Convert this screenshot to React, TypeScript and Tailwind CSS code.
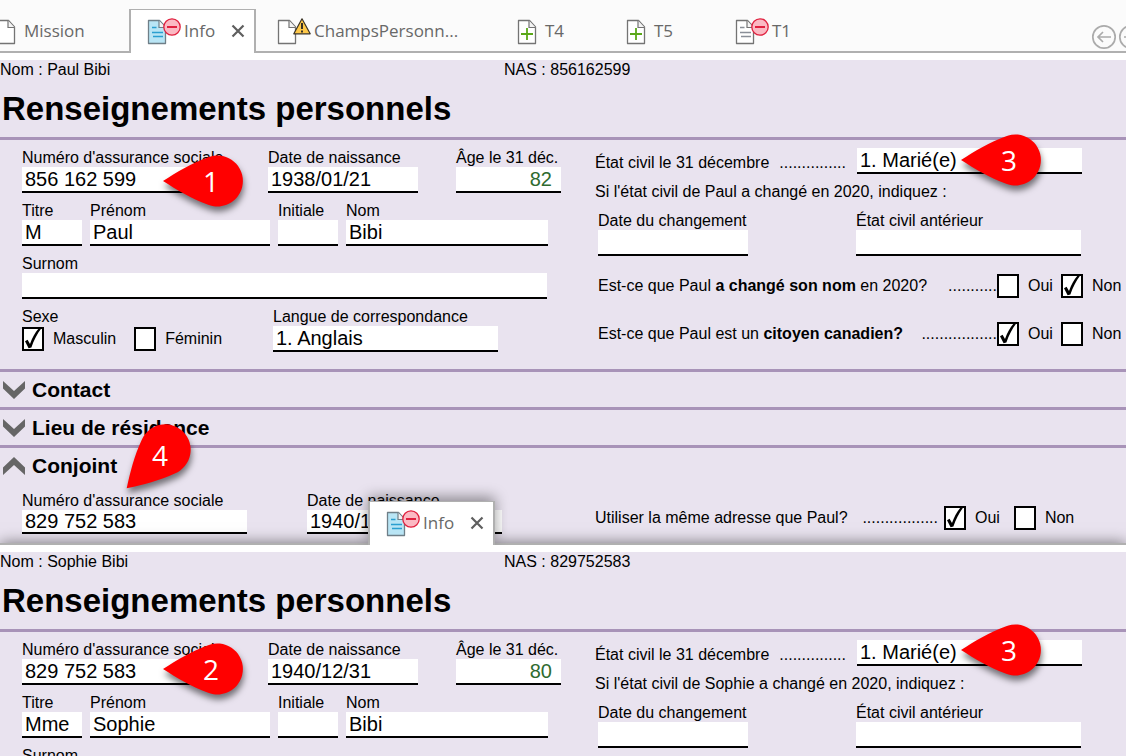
import React, { useId } from "react";

type Badge = "minus" | "warning";
type DocKind = "blank" | "lines" | "active" | "plus";

interface DocIconProps {
  kind: DocKind;
  badge?: Badge;
}

const DocIcon: React.FC<DocIconProps> = ({ kind, badge }) => {
  const stroke = kind === "active" ? "#6f7f88" : "#747474";
  const lineColor = kind === "active" ? "#2a9fd0" : "#8a8f98";

  return (
    <svg
      width={badge ? 34 : 20}
      height={28}
      viewBox={badge ? "0 0 34 28" : "0 0 20 28"}
      fill="none"
      className="shrink-0"
      aria-hidden="true"
    >
      <path
        d="M1.5 3.5H12.5L18.5 10V26.5H1.5Z"
        fill={kind === "active" ? "#b9e5f5" : "#ffffff"}
        stroke={stroke}
        strokeWidth={1.3}
        strokeLinejoin="round"
      />
      <path d="M12 3.5V10.5H18.5" fill="#f4f4f4" stroke={stroke} strokeWidth={1.2} />
      {(kind === "lines" || kind === "active") && (
        <path d="M5 10.5H9.5M5 15.5H16M6 19.5H16" stroke={lineColor} strokeWidth={1.4} />
      )}
      {kind === "plus" && (
        <path d="M4 17H16M10 11V23" stroke="#5aa818" strokeWidth={1.8} />
      )}
      {badge === "minus" && (
        <>
          <circle cx={25} cy={10} r={8.2} fill="#fbb9c3" stroke="#e0213f" strokeWidth={1.3} />
          <path d="M20 10H30" stroke="#e0213f" strokeWidth={2} />
        </>
      )}
      {badge === "warning" && (
        <>
          <path
            d="M25 1.8L33.2 16.8H16.8Z"
            fill="#ffc94a"
            stroke="#3a3326"
            strokeWidth={1.2}
            strokeLinejoin="round"
          />
          <path d="M25 6V12M25 13.4V15.4" stroke="#222222" strokeWidth={1.8} />
        </>
      )}
    </svg>
  );
};

const CloseIcon = () => (
  <svg width={14} height={14} viewBox="0 0 14 14" fill="none" aria-hidden="true">
    <path d="M1.5 1.5L12.5 12.5M12.5 1.5L1.5 12.5" stroke="#5f5f5f" strokeWidth={2.2} />
  </svg>
);

const ArrowIcon = ({ flip = false }: { flip?: boolean }) => (
  <svg
    width={26}
    height={26}
    viewBox="0 0 26 26"
    fill="none"
    stroke="#ababab"
    strokeWidth={1.7}
    className={flip ? "rotate-180" : ""}
    aria-hidden="true"
  >
    <circle cx={13} cy={13} r={11.2} />
    <path d="M20 13H7.5M12 8L7 13L12 18" />
  </svg>
);

const ActiveTab = () => (
  <div className="flex h-11 w-[127px] shrink-0 items-center border-x-2 border-t border-[#b0b0b0] bg-white pb-0.5 pl-4 text-[17px] text-[#686868]">
    <button type="button" className="flex items-center gap-[3px]">
      <DocIcon kind="active" badge="minus" />
      Info
    </button>
    <button type="button" aria-label="Fermer" className="ml-4">
      <CloseIcon />
    </button>
  </div>
);

interface TabProps {
  label: string;
  kind: DocKind;
  badge?: Badge;
  className: string;
}

const Tab: React.FC<TabProps> = ({ label, kind, badge, className }) => (
  <button
    type="button"
    className={`flex h-11 shrink-0 items-center border-b-2 border-[#b0b0b0] pt-px text-[17px] whitespace-nowrap text-[#686868] ${
      badge ? "gap-[3px]" : "gap-2"
    } ${className}`}
  >
    <DocIcon kind={kind} badge={badge} />
    {label}
  </button>
);

interface FieldProps {
  label: string;
  width: string;
  value?: string;
  options?: boolean;
  computed?: boolean;
  hideLabel?: boolean;
  short?: boolean;
}

const Field: React.FC<FieldProps> = ({
  label,
  width,
  value = "",
  options = false,
  computed = false,
  hideLabel = false,
  short = false,
}) => {
  const id = useId();
  const box = `block w-full appearance-none rounded-none border-b-2 border-black bg-white px-[3px] text-[20px] outline-none ${
    short ? "h-6 leading-5" : "h-[26px] leading-6"
  } ${computed ? "pr-[9px] text-right text-[#2f6b2f]" : ""}`;

  return (
    <div className={`shrink-0 ${width}`}>
      {!hideLabel && (
        <label htmlFor={id} className="block h-5 leading-[22px] whitespace-nowrap">
          {label}
        </label>
      )}
      {options ? (
        <select id={id} aria-label={label} defaultValue={value} className={box}>
          <option value={value}>{value}</option>
        </select>
      ) : (
        <input
          id={id}
          type="text"
          defaultValue={value}
          readOnly={computed}
          className={box}
        />
      )}
    </div>
  );
};

interface CheckProps {
  label: string;
  checked?: boolean;
}

const Check: React.FC<CheckProps> = ({ label, checked = false }) => (
  <label className="flex shrink-0 items-center gap-[9px]">
    <span className="relative block h-6 w-[22px]">
      <input
        type="checkbox"
        defaultChecked={checked}
        className="peer block h-6 w-[22px] appearance-none border-2 border-black bg-white"
      />
      <svg
        viewBox="0 0 22 24"
        className="pointer-events-none absolute inset-0 hidden h-6 w-[22px] peer-checked:block"
        aria-hidden="true"
      >
        <path
          d="M3 14.2L5.6 12.8L8 17C10.2 11 13 5.5 16.6 1.5L19.2 1.5C15 7 11.8 13.500 9.400 20.500L6.600 21.300Z"
          fill="#000000"
        />
      </svg>
    </span>
    {label}
  </label>
);

interface PinProps {
  number: number;
  className: string;
  tilted?: boolean;
}

const Pin: React.FC<PinProps> = ({ number, className, tilted = false }) => (
  <div
    className={`pointer-events-none absolute z-10 flex h-[52px] w-20 items-center justify-center ${className}`}
  >
    <svg
      viewBox="0 0 80 52"
      className="absolute inset-0 h-[52px] w-20 overflow-visible drop-shadow-[1px_5px_3px_rgba(0,0,0,0.5)]"
      aria-hidden="true"
    >
      <path
        d="M0 26C14 17 29 8 44.500 2.500A25.500 25.500 0 1 1 44.500 49.500C29 44 14 35 0 26Z"
        fill="#ff0000"
        transform={tilted ? "rotate(-45 40 26)" : undefined}
      />
    </svg>
    <span
      className={`relative font-['Open_Sans',sans-serif] text-[28px] leading-none text-white ${
        tilted ? "pb-2.5 pl-2.5" : "pl-4"
      }`}
    >
      {number}
    </span>
  </div>
);

const Chevron = ({ up = false }: { up?: boolean }) => (
  <svg
    width={22}
    height={18}
    viewBox="0 0 22 18"
    className={up ? "rotate-180" : ""}
    aria-hidden="true"
  >
    <path d="M0 0L11 10L22 0V7.500L11 18L0 7.500Z" fill="#666666" />
  </svg>
);

const SectionHeader = ({ title, open = false }: { title: string; open?: boolean }) => (
  <h2 className="border-t-3 border-[#a893b8]">
    <button
      type="button"
      aria-expanded={open}
      className="flex h-[35px] w-full items-center gap-[7px] pl-[3px] text-[21px] font-bold"
    >
      <Chevron up={open} />
      {title}
    </button>
  </h2>
);

interface Person {
  firstName: string;
  title: string;
  nas: string;
  birthDate: string;
  age: string;
}

const paul: Person = {
  firstName: "Paul",
  title: "M",
  nas: "856 162 599",
  birthDate: "1938/01/21",
  age: "82",
};

const sophie: Person = {
  firstName: "Sophie",
  title: "Mme",
  nas: "829 752 583",
  birthDate: "1940/12/31",
  age: "80",
};

const PageHeader = ({ person }: { person: Person }) => (
  <header>
    <div className="flex">
      <p className="w-[504px] shrink-0">Nom : {person.firstName} Bibi</p>
      <p>NAS : {person.nas.replace(/ /g, "")}</p>
    </div>
    <h1 className="border-b-3 border-[#a893b8] py-[9px] pl-0.5 text-[33px] leading-[39px] font-bold">
      Renseignements personnels
    </h1>
  </header>
);

const IdentityFields = ({ person }: { person: Person }) => (
  <>
    <div className="flex">
      <Field label="Numéro d'assurance sociale" width="w-[180px]" value={person.nas} />
      <div className="ml-[66px] flex gap-[38px]">
        <Field label="Date de naissance" width="w-[150px]" value={person.birthDate} />
        <Field label="Âge le 31 déc." width="w-[105px]" value={person.age} computed />
      </div>
    </div>
    <div className="flex gap-2">
      <Field label="Titre" width="w-[60px]" value={person.title} />
      <Field label="Prénom" width="w-[180px]" value={person.firstName} />
      <Field label="Initiale" width="w-[60px]" />
      <Field label="Nom" width="w-[202px]" value="Bibi" />
    </div>
    <Field label="Surnom" width="w-[525px]" />
  </>
);

const CivilStatus = ({ person }: { person: Person }) => (
  <>
    <div className="flex items-end justify-between">
      <p className="flex w-[251px] justify-between pb-px whitespace-nowrap">
        État civil le 31 décembre <span>...............</span>
      </p>
      <div className="w-[269px] shrink-0">
        <Field
          label="État civil le 31 décembre"
          width="w-[225px]"
          value="1. Marié(e)"
          options
          hideLabel
        />
      </div>
    </div>
    <p className="mt-2 whitespace-nowrap">
      Si l'état civil de {person.firstName} a changé en 2020, indiquez :
    </p>
    <div className="mt-2 flex gap-[108px] pl-[3px]">
      <Field label="Date du changement" width="w-[150px]" />
      <Field label="État civil antérieur" width="w-[225px]" options />
    </div>
  </>
);

interface QuestionProps {
  children: React.ReactNode;
  dots: string;
  answer: "Oui" | "Non";
}

const Question: React.FC<QuestionProps> = ({ children, dots, answer }) => (
  <div className="flex items-center pl-[3px]">
    <p className="flex flex-1 justify-between whitespace-nowrap">
      <span>{children}</span>
      <span>{dots}</span>
    </p>
    <div className="flex w-[129px] shrink-0">
      <div className="w-16">
        <Check label="Oui" checked={answer === "Oui"} />
      </div>
      <Check label="Non" checked={answer === "Non"} />
    </div>
  </div>
);

export default function App() {
  return (
    <div className="h-screen overflow-hidden bg-white font-['Liberation_Sans',Arial,sans-serif] text-[16px] leading-5 text-black">
      {/* Onglets */}
      <nav className="flex h-[53px] items-end overflow-hidden bg-[#fbfbfb] font-['Open_Sans',sans-serif]">
        <Tab label="Mission" kind="blank" className="-ml-1 w-[133px]" />
        <ActiveTab />
        <Tab
          label="ChampsPersonn..."
          kind="blank"
          badge="warning"
          className="w-[242px] pl-[21px]"
        />
        <Tab label="T4" kind="plus" className="w-[109px] pl-[19px]" />
        <Tab label="T5" kind="plus" className="w-[109px] pl-[19px]" />
        <Tab label="T1" kind="lines" badge="minus" className="w-[109px] pl-[19px]" />
        <div className="flex h-11 flex-1 items-end justify-end gap-px border-b-2 border-[#b0b0b0]">
          <button type="button" aria-label="Précédent" className="mb-px shrink-0">
            <ArrowIcon />
          </button>
          <button type="button" aria-label="Suivant" className="-mr-[18px] mb-px shrink-0">
            <ArrowIcon flip />
          </button>
        </div>
      </nav>

      {/* Déclaration de Paul */}
      <main className="relative mt-[7px] bg-[#e9e3ef]">
        <PageHeader person={paul} />
        <div className="flex pb-[17px]">
          <div className="flex w-[595px] shrink-0 flex-col gap-[7px] pt-[7px] pl-[22px]">
            <IdentityFields person={paul} />
            <div className="flex">
              <fieldset className="w-[251px] shrink-0">
                <legend className="h-5 leading-[22px]">Sexe</legend>
                <div className="flex gap-[18px] pt-px">
                  <Check label="Masculin" checked />
                  <Check label="Féminin" />
                </div>
              </fieldset>
              <Field
                label="Langue de correspondance"
                width="w-[225px]"
                value="1. Anglais"
                options
              />
            </div>
          </div>
          <div className="min-w-0 flex-1 pt-2">
            <CivilStatus person={paul} />
            <div className="mt-[18px] flex flex-col gap-6">
              <Question dots="..........." answer="Non">
                Est-ce que Paul <b>a changé son nom</b> en 2020?
              </Question>
              <Question dots="................." answer="Oui">
                Est-ce que Paul est un <b>citoyen canadien?</b>
              </Question>
            </div>
          </div>
        </div>

        <SectionHeader title="Contact" />
        <SectionHeader title="Lieu de résidence" />
        <SectionHeader title="Conjoint" open />
        <div className="flex items-start pt-[7px] pb-[9px]">
          <div className="flex w-[595px] shrink-0 gap-[60px] pl-[22px]">
            <Field
              label="Numéro d'assurance sociale"
              width="w-[225px]"
              value="829 752 583"
              short
            />
            <Field label="Date de naissance" width="w-[195px]" value="1940/12/31" short />
          </div>
          <div className="flex flex-1 items-center gap-1.5 pt-4">
            <p className="flex w-[343px] shrink-0 justify-between whitespace-nowrap">
              Utiliser la même adresse que Paul? <span>.................</span>
            </p>
            <div className="flex gap-3.5">
              <Check label="Oui" checked />
              <Check label="Non" />
            </div>
          </div>
        </div>

        <Pin number={1} className="top-[95px] left-[163px]" />
        <Pin number={3} className="top-[74px] left-[961px]" />
        <Pin number={4} className="top-[374px] left-[115px]" tilted />
      </main>

      {/* Déclaration de Sophie */}
      <section className="relative border-t-2 border-[#b0b0b0] bg-white pt-[7px] shadow-[0_0_14px_rgba(0,0,0,0.5)]">
        <div className="absolute -top-11 left-[368px] bg-white font-['Open_Sans',sans-serif] shadow-[0_-4px_14px_rgba(0,0,0,0.4)] [clip-path:inset(-24px_-24px_0_-24px)]">
          <ActiveTab />
        </div>
        <div className="relative bg-[#e9e3ef]">
          <PageHeader person={sophie} />
          <div className="flex">
            <div className="flex w-[595px] shrink-0 flex-col gap-[7px] pt-[7px] pl-[22px]">
              <IdentityFields person={sophie} />
            </div>
            <div className="min-w-0 flex-1 pt-2">
              <CivilStatus person={sophie} />
            </div>
          </div>
          <Pin number={2} className="top-[91px] left-[163px]" />
          <Pin number={3} className="top-[72px] left-[961px]" />
        </div>
      </section>
    </div>
  );
}
